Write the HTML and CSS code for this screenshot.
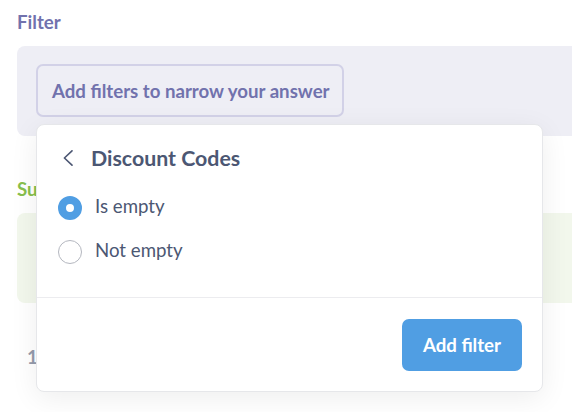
FILE: index.html
```html
<!DOCTYPE html>
<html>
<head>
<meta charset="utf-8">
<link rel="stylesheet" href="styles.css">
</head>
<body>
<div class="page">
  <section class="step">
    <div class="step-label filter-label">Filter</div>
    <div class="step-box filter-box">
      <button class="filter-btn">Add filters to narrow your answer</button>
    </div>
  </section>
  <section class="step summarize">
    <div class="step-label summarize-label">Summarize</div>
    <div class="step-box summarize-box"></div>
  </section>
  <div class="row-count">1</div>

  <div class="popover">
    <div class="pop-header">
      <svg class="chev" width="20" height="16" viewBox="0 0 20 20"><path d="M15 1 L5.5 10 L15 19" fill="none" stroke="#4c5773" stroke-width="2" stroke-linecap="round" stroke-linejoin="round"/></svg>
      <span class="pop-title">Discount Codes</span>
    </div>
    <div class="options">
      <label class="option"><span class="radio checked"></span><span class="opt-text">Is empty</span></label>
      <label class="option"><span class="radio"></span><span class="opt-text">Not empty</span></label>
    </div>
    <div class="pop-footer">
      <button class="add-btn">Add filter</button>
    </div>
  </div>
</div>
</body>
</html>
```

FILE: styles.css
```css
html, body {
  margin: 0;
  padding: 0;
  background: #ffffff;
  overflow: hidden;
  font-family: Lato, "Noto Sans", sans-serif;
}
.page {
  position: relative;
  width: 572px;
  height: 412px;
  padding: 11px 0 0 17px;
  box-sizing: border-box;
}
.step-label {
  font-size: 18.67px;
  font-weight: 700;
  line-height: 22px;
}
.filter-label { color: #7172ad; }
.summarize-label { color: #88bf4d; }
.step-box {
  margin-top: 13px;
  width: 555px;
  border-radius: 8px 0 0 8px;
  box-sizing: border-box;
}
.filter-box {
  background: #eeeef5;
  padding: 18px 0 19px 19px;
}
.filter-btn {
  display: block;
  height: 53px;
  width: 308px;
  box-sizing: border-box;
  border: 2px solid #d2d1e7;
  border-radius: 7px;
  background: transparent;
  color: #7172ad;
  font-family: Lato, "Noto Sans", sans-serif;
  font-weight: 700;
  font-size: 18.67px;
  padding: 0 0 0 14px;
  text-align: left;
  white-space: nowrap;
}
.summarize { margin-top: 42px; }
.summarize .step-box {
  margin-top: 13px;
}
.summarize-box {
  background: #f2f7ec;
  height: 90px;
}
.row-count {
  margin-top: 43px;
  padding-left: 10px;
  font-size: 18.67px;
  line-height: 22px;
  color: #949aab;
  font-weight: 700;
}
.popover {
  position: absolute;
  left: 36px;
  top: 124px;
  width: 507px;
  height: 268px;
  box-sizing: border-box;
  background: #ffffff;
  border: 1px solid #e6e7ea;
  border-radius: 8px;
  box-shadow: 0 6px 28px rgba(0, 0, 0, 0.07);
  display: flex;
  flex-direction: column;
}
.pop-header {
  display: flex;
  align-items: center;
  padding: 21px 20px 0 21px;
  height: 24px;
}
.chev {
  display: block;
  width: 20px;
  height: 16px;
  margin-right: 13px;
}
.pop-title {
  font-size: 21.33px;
  font-weight: 700;
  color: #4c5773;
  line-height: 24px;
}
.options {
  margin-top: 16px;
  padding: 0 21px 23px;
  border-bottom: 1px solid #ececef;
}
.option {
  display: flex;
  align-items: center;
  height: 44px;
}
.radio {
  width: 24px;
  height: 24px;
  box-sizing: border-box;
  border-radius: 50%;
  border: 1px solid #b4b7bf;
  margin-right: 13px;
  flex: none;
}
.radio.checked {
  border: 8px solid #509ee3;
  background: #ffffff;
}
.opt-text {
  font-size: 18.67px;
  color: #4c5773;
  margin-top: -4px;
}
.pop-footer {
  display: flex;
  justify-content: flex-end;
  padding: 21px 20px 0;
}
.add-btn {
  width: 120px;
  height: 52px;
  border: none;
  border-radius: 7px;
  background: #509ee3;
  color: #ffffff;
  font-family: Lato, "Noto Sans", sans-serif;
  font-weight: 700;
  font-size: 18.67px;
}
```
